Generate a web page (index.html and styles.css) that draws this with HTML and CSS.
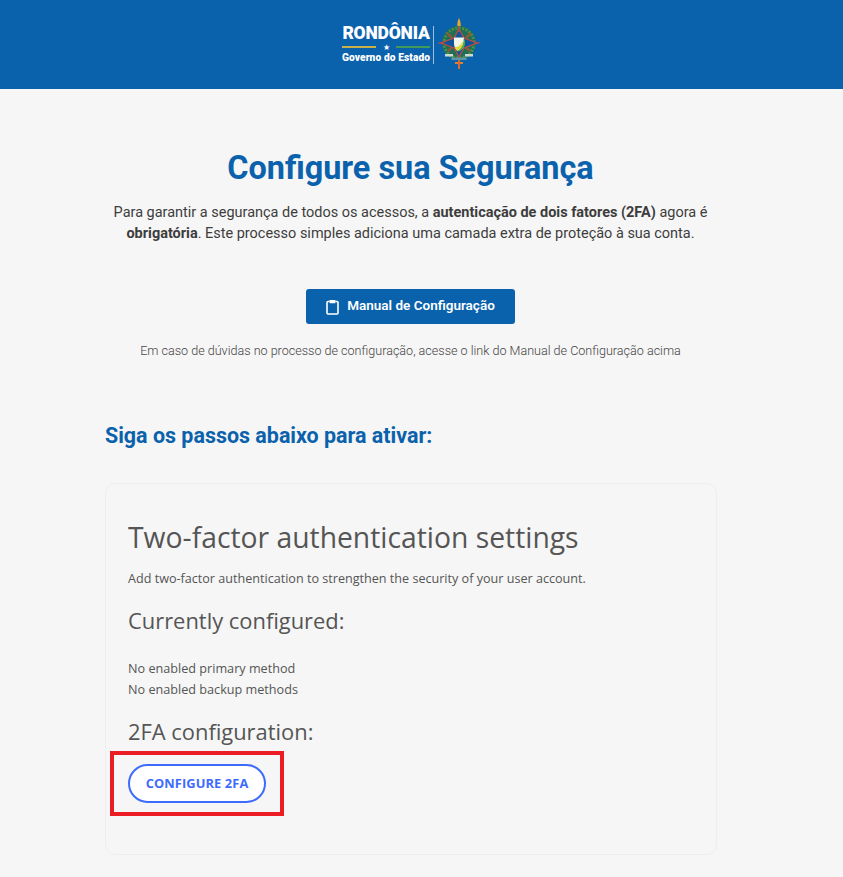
FILE: index.html
```html
<!DOCTYPE html>
<html lang="pt-BR">
<head>
<meta charset="utf-8">
<title>Configure sua Segurança</title>
<link rel="stylesheet" href="styles.css">
</head>
<body>
<div class="page">
  <header class="top">
    <div class="logo">
      <div class="wordmark">
        <div class="state">RONDÔNIA</div>
        <div class="rule"><span class="rule-y"></span><span class="star">★</span><span class="rule-g"></span></div>
        <div class="gov">Governo do Estado</div>
      </div>
      <span class="divider"></span>
      <svg class="crest" width="46" height="58" viewBox="0 0 46 58" aria-hidden="true">
        <path d="M23 4c1.500 3 2 6 1.500 9l-1.500 3-1.500-3c-.5-3 0-6 1.500-9z" fill="#e8a62c"/>
        <circle cx="23" cy="29" r="17" fill="#1f6f55"/>
        <circle cx="23" cy="29" r="15" fill="none" stroke="#4d8f4a" stroke-width="3" stroke-dasharray="2 1.500"/>
        <path d="M11 19l5 5M35 19l-5 5M12 37l5-4M34 37l-5-4" stroke="#8a5a3a" stroke-width="2.500"/>
        <path d="M23 15L28 24 41 29 28 34 23 43 18 34 5 29 18 24z" fill="#10559a" stroke="#c24a4a" stroke-width="1.200"/>
        <path d="M23 12v6M2 29h6M38 29h6" stroke="#c24a4a" stroke-width="1.200"/>
        <path d="M18 23.500h10v6c0 4-2.500 6-5 7.500-2.500-1.500-5-3.500-5-7.500z" fill="#f4f6ea"/>
        <path d="M27.500 24c.5 5-1.500 10-6.500 12.500l2 1c4-2 6-5 6-8 0-2 0-4-1.500-5.500z" fill="#4caf50"/>
        <path d="M18.500 33c3 .5 6-1 7.500-5l1 .5c-.5 4-2.500 7-5.500 8.500-1.500-1-2.500-2.500-3-4z" fill="#e9d93a"/>
        <rect x="9" y="40" width="8" height="2.500" fill="#cfd8cf"/>
        <rect x="29" y="40" width="8" height="2.500" fill="#cfd8cf"/>
        <rect x="15.500" y="43.500" width="15" height="2.500" fill="#5f95a8"/>
        <path d="M22 46h2v9h-2zM19 48h8v2h-8z" fill="#e0812c"/>
        <path d="M23 46v9" stroke="#d9402c" stroke-width=".8"/>
      </svg>
    </div>
  </header>

  <main class="content">
    <section class="intro">
      <h1 class="title">Configure sua Segurança</h1>
      <p class="lead">Para garantir a segurança de todos os acessos, a <strong>autenticação de dois fatores (2FA)</strong> agora é <strong>obrigatória</strong>. Este processo simples adiciona uma camada extra de proteção à sua conta.</p>
      <a class="manual" href="#">
        <svg width="13" height="16" viewBox="0 0 13 16" aria-hidden="true"><path d="M3.500 2.500H2a1 1 0 0 0-1 1V14a1 1 0 0 0 1 1h9a1 1 0 0 0 1-1V3.500a1 1 0 0 0-1-1H9.500" fill="none" stroke="#fff" stroke-width="1.600"/><rect x="3.500" y="1" width="6" height="3.200" rx=".6" fill="#fff"/></svg>
        <span class="manual-label">Manual de Configuração</span>
      </a>
      <p class="hint">Em caso de dúvidas no processo de configuração, acesse o link do Manual de Configuração acima</p>
    </section>

    <section class="steps">
      <h2 class="steps-title">Siga os passos abaixo para ativar:</h2>
      <div class="card">
        <h3 class="card-title">Two-factor authentication settings</h3>
        <p class="card-text">Add two-factor authentication to strengthen the security of your user account.</p>
        <h4 class="card-sub">Currently configured:</h4>
        <p class="status">No enabled primary method</p>
        <p class="status">No enabled backup methods</p>
        <h4 class="card-sub config">2FA configuration:</h4>
        <div class="highlight"><a class="pill" href="#">CONFIGURE 2FA</a></div>
      </div>
    </section>
  </main>
</div>
</body>
</html>
```
FILE: styles.css
```css
* { box-sizing: border-box; }
html, body { margin: 0; padding: 0; height: 877px; overflow: hidden; }
body { background: #f6f6f6; font-family: Roboto, sans-serif; color: #333; }
.page { width: 843px; }
.top { height: 89px; background: #0b62ac; display: flex; justify-content: center; align-items: center; padding-right: 19px; }
.logo { display: flex; align-items: center; color: #fff; }
.wordmark { width: 88px; display: flex; flex-direction: column; align-items: center; padding-bottom: 2px; }
.state { font: 900 17.500px/18px Roboto, sans-serif; letter-spacing: -.2px; white-space: nowrap; }
.rule { width: 88px; display: flex; align-items: center; justify-content: space-between; height: 9px; margin: 1px 0 0; }
.rule-y { width: 34px; height: 2px; background: #c9b04a; }
.rule-g { width: 34px; height: 2px; background: #3f9a5c; }
.star { font-size: 8px; line-height: 9px; }
.gov { font: 900 10.200px/12px Roboto, sans-serif; letter-spacing: .1px; white-space: nowrap; }
.divider { width: 1px; height: 38px; background: #9dbfdc; margin: 0 2px 0 3px; }
.crest { display: block; margin-bottom: 4px; }
.content { width: 821px; padding-top: 60px; }
.intro { display: flex; flex-direction: column; align-items: center; }
.title { margin: 0; font: 700 32.400px/38px Roboto, sans-serif; color: #0b62ac; }
.lead { margin: 15px 0 0; width: 640px; text-align: center; font-size: 14.480px; line-height: 21px; color: #3d3d3d; }
.lead strong { font-weight: 700; }
.manual { margin-top: 45px; height: 35px; width: 209px; display: flex; align-items: center; justify-content: center; gap: 8px; background: #0b62ac; border-radius: 3px; color: #fff; font: 600 13.500px/1 Roboto, sans-serif; text-decoration: none; }
.manual-label { padding-bottom: 1px; }
.hint { margin: 20px 0 0; font-size: 12.570px; font-weight: 300; line-height: 14px; color: #444; }
.steps { margin: 65px 0 0 105px; width: 612px; }
.steps-title { margin: 0; font: 700 21.450px/26px Roboto, sans-serif; color: #0b62ac; }
.card { margin-top: 34px; height: 372px; border: 1px solid #eeeeee; border-radius: 10px; padding: 34px 22px 0; font-family: "Open Sans", sans-serif; color: #555; }
.card-title { margin: 0; font: 400 28.300px/38px "Open Sans", sans-serif; color: #555; }
.card-text { margin: 14px 0 0; font-size: 12.600px; line-height: 18px; color: #555; }
.card-sub { margin: 19px 0 0; font: 400 21.900px/28px "Open Sans", sans-serif; color: #555; }
.status { margin: 0; font-size: 12.650px; line-height: 21px; color: #555; }
.card-sub:first-of-type + .status { margin-top: 23px; }
.config { margin-top: 18px; }
.highlight { margin: 5px 0 0 -18px; width: 174px; height: 65px; border: 4px solid #ec1c24; display: flex; align-items: center; justify-content: center; }
.pill { width: 138px; height: 39px; border: 2px solid #3d6bff; border-radius: 20px; background: #fff; color: #3d6bff; display: flex; align-items: center; justify-content: center; font: 700 12.850px/1 "Open Sans", sans-serif; text-decoration: none; letter-spacing: .1px; }
```
